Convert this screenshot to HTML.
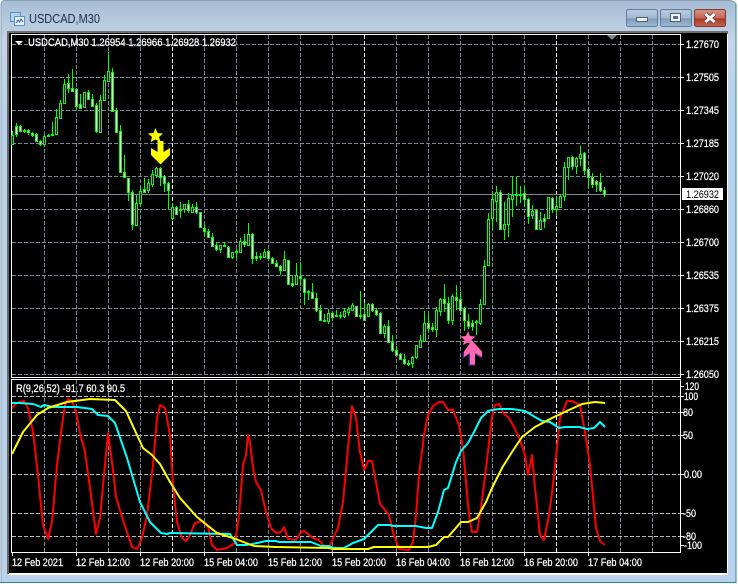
<!DOCTYPE html>
<html><head><meta charset="utf-8"><style>
html,body{margin:0;padding:0;background:#fff}
body{width:738px;height:584px;overflow:hidden;position:relative}
svg{position:absolute;left:0;top:0;display:block}
text{font-family:"Liberation Sans",sans-serif}
.t{stroke:#fff;stroke-width:.25}
</style></head><body>
<svg width="738" height="584" viewBox="0 0 738 584" xmlns="http://www.w3.org/2000/svg">
<defs>
<linearGradient id="f" x1="0" y1="0" x2="0" y2="1"><stop offset="0" stop-color="#a7bdd5"/><stop offset=".07" stop-color="#c4d5e6"/><stop offset=".2" stop-color="#b9d1ea"/><stop offset="1" stop-color="#b9d1ea"/></linearGradient>
<linearGradient id="b" x1="0" y1="0" x2="0" y2="1"><stop offset="0" stop-color="#b8ccdf"/><stop offset=".5" stop-color="#a0b8d0"/><stop offset=".55" stop-color="#7f9bb9"/><stop offset="1" stop-color="#a0bad4"/></linearGradient>
<linearGradient id="c" x1="0" y1="0" x2="0" y2="1"><stop offset="0" stop-color="#d69585"/><stop offset=".5" stop-color="#c76656"/><stop offset=".55" stop-color="#ab3a28"/><stop offset="1" stop-color="#c4634c"/></linearGradient>
</defs>
<rect width="738" height="584" fill="#fff"/>
<path d="M4 0.5H730Q736 1 736 6V582.5H1V5Q1 1 4 .5Z" fill="url(#f)" stroke="#8aa0b6"/>
<path d="M0 582.5H736V4" fill="none" stroke="#2e8c9c"/>
<rect x="8" y="31" width="720" height="544" fill="#fff"/>
<rect x="7" y="31" width="2" height="543" fill="#666"/>
<rect x="7" y="31" width="721" height="3" fill="#6e6e6e"/>
<rect x="9" y="33" width="718" height="540" fill="#000"/>

<!-- title -->
<g>
<rect x="10.5" y="12.5" width="10" height="9" fill="#b5d2ee" stroke="#5c8fc4"/>
<rect x="14.5" y="16.5" width="10" height="9" fill="#e6f1fb" stroke="#5c8fc4"/>
<path d="M16 23l2-3 1.500 2 1.500-3 2 3" fill="none" stroke="#3a5f9a"/>
</g>
<text x="29" y="23" font-size="12.500" fill="#1f2b4d" textLength="71" lengthAdjust="spacingAndGlyphs">USDCAD,M30</text>

<!-- buttons -->
<rect x="626.500" y="9.500" width="31" height="17" rx="2" fill="url(#b)" stroke="#5f7d9d"/>
<rect x="660.500" y="9.500" width="31" height="17" rx="2" fill="url(#b)" stroke="#5f7d9d"/>
<rect x="694.500" y="9.500" width="31" height="17" rx="2" fill="url(#c)" stroke="#7d3a30"/>
<rect x="636.500" y="17.500" width="11" height="4" fill="#f0f3f6" stroke="#4d5f73"/>
<rect x="670.500" y="13.500" width="10" height="8" fill="#f0f3f6" stroke="#4d5f73"/>
<rect x="673" y="16" width="5" height="3" fill="#5a6d82"/>
<path d="M705.500 14l9 8M714.500 14l-9 8" stroke="#5d2a20" stroke-width="4.500" fill="none"/>
<path d="M705.500 14l9 8M714.500 14l-9 8" stroke="#fff" stroke-width="3" fill="none"/>

<!-- chart borders -->
<path d="M11.500 34.500H680.500V377.500H11.500ZM11.500 379.500H680.500V552.500H11.500Z" fill="none" stroke="#fff"/>

<!-- grid -->
<path shape-rendering="crispEdges" fill="none" stroke="#778899" stroke-dasharray="4 2" d="M44.500 35V377M76.500 35V377M108.500 35V377M140.500 35V377M204.500 35V377M236.500 35V377M268.500 35V377M300.500 35V377M332.500 35V377M396.500 35V377M428.500 35V377M460.500 35V377M492.500 35V377M524.500 35V377M588.500 35V377M620.500 35V377M652.500 35V377M44.500 380V552M76.500 380V552M108.500 380V552M140.500 380V552M204.500 380V552M236.500 380V552M268.500 380V552M300.500 380V552M332.500 380V552M396.500 380V552M428.500 380V552M460.500 380V552M492.500 380V552M524.500 380V552M588.500 380V552M620.500 380V552M652.500 380V552"/>
<path shape-rendering="crispEdges" fill="none" stroke="#fff" stroke-dasharray="4 2" d="M172.500 35V377M364.500 35V377M556.500 35V377M172.500 380V552M364.500 380V552M556.500 380V552"/>
<path shape-rendering="crispEdges" fill="none" stroke="#778899" stroke-dasharray="4 2" d="M12 44.500H680M12 77.500H680M12 110.500H680M12 143.500H680M12 176.500H680M12 209.500H680M12 242.500H680M12 275.500H680M12 308.500H680M12 341.500H680M12 374.500H680"/>
<path shape-rendering="crispEdges" fill="none" stroke="#bbb" stroke-dasharray="4 2" d="M12 396.500H680M12 412.500H680M12 435.500H680M12 474.500H680M12 513.500H680M12 536.500H680"/>
<path shape-rendering="crispEdges" fill="none" stroke="#778899" d="M12 194.500H680"/>
<polygon points="607,35 617,35 612,40" fill="#778899"/>
<polygon points="15,41 23,41 19,45" fill="#fff"/>

<!-- wicks -->
<path shape-rendering="crispEdges" fill="none" stroke="#00ff00" d="M12.500 131V145M16.500 123V137M20.500 125V132M24.500 129V133M28.500 129V135M32.500 132V137M36.500 133V141M40.500 140V146M44.500 135V145M48.500 134V137M52.500 122V136M56.500 109V135M60.500 100V119M64.500 79V104M68.500 74V93M72.500 69V91M76.500 88V109M80.500 94V109M84.500 92V107M88.500 90V100M92.500 94V107M96.500 103V133M100.500 95V133M104.500 75V101M108.500 52V81M112.500 68V112M116.500 108V132M120.500 125V172M124.500 155V178M128.500 178V201M132.500 190V230M136.500 195V226M140.500 187V206M144.500 178V193M148.500 179V193M152.500 170V187M156.500 167V178M160.500 167V186M164.500 175V192M168.500 182V209M172.500 203V220M176.500 206V215M180.500 202V218M184.500 204V213M188.500 200V213M192.500 204V213M196.500 202V214M200.500 212V228M204.500 224V237M208.500 229V238M212.500 233V247M216.500 242V251M220.500 245V253M224.500 242V247M228.500 246V258M232.500 252V259M236.500 249V259M240.500 238V253M244.500 234V247M248.500 223V246M252.500 233V264M256.500 252V261M260.500 253V260M264.500 249V258M268.500 250V259M272.500 257V264M276.500 260V267M280.500 265V275M284.500 251V270M288.500 260V285M292.500 275V287M296.500 263V285M300.500 262V286M304.500 278V305M308.500 290V300M312.500 283V299M316.500 293V312M320.500 305V321M324.500 314V322M328.500 309V324M332.500 312V319M336.500 310V317M340.500 312V319M344.500 308V318M348.500 307V316M352.500 303V311M356.500 306V317M360.500 291V319M364.500 302V321M368.500 303V317M372.500 303V312M376.500 308V316M380.500 312V334M384.500 324V338M388.500 320V343M392.500 335V352M396.500 346V356M400.500 353V360M404.500 354V365M408.500 360V366M412.500 356V368M416.500 345V359M420.500 335V348M424.500 311V342M428.500 315V332M432.500 323V332M436.500 307V337M440.500 298V316M444.500 284V312M448.500 297V324M452.500 294V325M456.500 285V310M460.500 292V312M464.500 307V331M468.500 314V329M472.500 320V331M476.500 320V335M480.500 299V325M484.500 260V305M488.500 213V266M492.500 193V230M496.500 186V222M500.500 190V229M504.500 202V240M508.500 193V237M512.500 177V217M516.500 177V206M520.500 186V203M524.500 187V207M528.500 198V224M532.500 205V219M536.500 209V229M540.500 212V229M544.500 214V228M548.500 197V218M552.500 197V213M556.500 196V216M560.500 195V207M564.500 162V201M568.500 157V180M572.500 156V170M576.500 157V174M580.500 146V166M584.500 152V175M588.500 167V188M592.500 173V188M596.500 180V192M600.500 173V192M604.500 187V197"/>
<!-- black bodies -->
<path shape-rendering="crispEdges" fill="#000" stroke="#00ff00" d="M11.500 135.500h2v9h-2zM43.500 136.500h2v8h-2zM47.500 135.500h2v1h-2zM51.500 134.500h2v1h-2zM55.500 117.500h2v17h-2zM59.500 103.500h2v15h-2zM63.500 84.500h2v19h-2zM83.500 92.500h2v15h-2zM99.500 100.500h2v32h-2zM103.500 80.500h2v20h-2zM107.500 71.500h2v10h-2zM135.500 203.500h2v22h-2zM139.500 191.500h2v12h-2zM147.500 183.500h2v7h-2zM151.500 174.500h2v10h-2zM155.500 168.500h2v7h-2zM171.500 207.500h2v11h-2zM179.500 209.500h2v1h-2zM183.500 204.500h2v5h-2zM191.500 207.500h2v5h-2zM219.500 245.500h2v4h-2zM223.500 245.500h2v1h-2zM231.500 252.500h2v5h-2zM239.500 241.500h2v11h-2zM247.500 234.500h2v11h-2zM263.500 252.500h2v5h-2zM283.500 259.500h2v11h-2zM295.500 275.500h2v9h-2zM327.500 313.500h2v8h-2zM343.500 311.500h2v5h-2zM347.500 309.500h2v3h-2zM351.500 305.500h2v5h-2zM367.500 304.500h2v12h-2zM383.500 326.500h2v7h-2zM411.500 357.500h2v6h-2zM415.500 345.500h2v12h-2zM419.500 340.500h2v7h-2zM423.500 323.500h2v18h-2zM435.500 310.500h2v19h-2zM439.500 299.500h2v12h-2zM451.500 296.500h2v24h-2zM479.500 304.500h2v19h-2zM483.500 266.500h2v38h-2zM487.500 219.500h2v46h-2zM491.500 199.500h2v19h-2zM495.500 192.500h2v9h-2zM503.500 224.500h2v5h-2zM507.500 198.500h2v26h-2zM511.500 195.500h2v4h-2zM531.500 211.500h2v4h-2zM539.500 220.500h2v9h-2zM547.500 197.500h2v21h-2zM555.500 206.500h2v3h-2zM559.500 196.500h2v11h-2zM563.500 167.500h2v29h-2zM567.500 157.500h2v10h-2zM575.500 158.500h2v8h-2zM579.500 154.500h2v4h-2z"/>
<!-- white bodies -->
<path shape-rendering="crispEdges" fill="#fff" stroke="#00ff00" d="M15.500 126.500h2v8h-2zM19.500 126.500h2v5h-2zM23.500 130.500h2v1h-2zM27.500 130.500h2v2h-2zM31.500 133.500h2v2h-2zM35.500 134.500h2v7h-2zM39.500 141.500h2v3h-2zM67.500 83.500h2v5h-2zM71.500 88.500h2v3h-2zM75.500 89.500h2v17h-2zM79.500 104.500h2v4h-2zM87.500 92.500h2v7h-2zM91.500 99.500h2v7h-2zM95.500 105.500h2v26h-2zM111.500 72.500h2v39h-2zM115.500 110.500h2v22h-2zM119.500 131.500h2v41h-2zM123.500 172.500h2v5h-2zM127.500 178.500h2v14h-2zM131.500 192.500h2v32h-2zM143.500 189.500h2v3h-2zM159.500 168.500h2v9h-2zM163.500 176.500h2v7h-2zM167.500 183.500h2v7h-2zM175.500 207.500h2v7h-2zM187.500 204.500h2v6h-2zM195.500 207.500h2v5h-2zM199.500 212.500h2v15h-2zM203.500 228.500h2v3h-2zM207.500 231.500h2v6h-2zM211.500 237.500h2v9h-2zM215.500 245.500h2v4h-2zM227.500 247.500h2v10h-2zM235.500 251.500h2v1h-2zM243.500 241.500h2v3h-2zM251.500 234.500h2v24h-2zM255.500 256.500h2v2h-2zM259.500 256.500h2v1h-2zM267.500 251.500h2v7h-2zM271.500 258.500h2v5h-2zM275.500 263.500h2v3h-2zM279.500 266.500h2v4h-2zM287.500 260.500h2v24h-2zM291.500 283.500h2v2h-2zM299.500 276.500h2v2h-2zM303.500 279.500h2v13h-2zM307.500 291.500h2v1h-2zM311.500 292.500h2v6h-2zM315.500 298.500h2v12h-2zM319.500 310.500h2v10h-2zM323.500 320.500h2v1h-2zM331.500 313.500h2v4h-2zM335.500 315.500h2v1h-2zM339.500 315.500h2v1h-2zM355.500 306.500h2v10h-2zM359.500 315.500h2v1h-2zM363.500 314.500h2v6h-2zM371.500 304.500h2v6h-2zM375.500 310.500h2v4h-2zM379.500 313.500h2v20h-2zM387.500 326.500h2v16h-2zM391.500 342.500h2v8h-2zM395.500 350.500h2v5h-2zM399.500 354.500h2v5h-2zM403.500 359.500h2v4h-2zM407.500 363.500h2v1h-2zM427.500 323.500h2v5h-2zM431.500 327.500h2v2h-2zM443.500 299.500h2v4h-2zM447.500 303.500h2v17h-2zM455.500 297.500h2v3h-2zM459.500 299.500h2v11h-2zM463.500 308.500h2v12h-2zM467.500 321.500h2v5h-2zM471.500 323.500h2v3h-2zM475.500 321.500h2v1h-2zM499.500 192.500h2v37h-2zM515.500 194.500h2v1h-2zM519.500 194.500h2v1h-2zM523.500 193.500h2v6h-2zM527.500 199.500h2v17h-2zM535.500 210.500h2v19h-2zM543.500 218.500h2v3h-2zM551.500 198.500h2v11h-2zM571.500 157.500h2v9h-2zM583.500 153.500h2v17h-2zM587.500 169.500h2v8h-2zM591.500 177.500h2v7h-2zM595.500 181.500h2v3h-2zM599.500 182.500h2v8h-2zM603.500 190.500h2v4h-2z"/>

<!-- arrows -->
<polygon points="155.500,128 157.500,133 163,133.500 159,137 160.500,142 155.500,139.500 150.500,142 152,137 148,133.500 153.500,133" fill="#ffff00"/>
<polygon points="157.500,141 163.500,141 163.500,152 170,148 170,155 160.500,164.500 151,155 151,148 157.500,152" fill="#ffff00"/>
<polygon points="472,342 482.500,353 482.500,358.500 475.500,354 475.500,365.500 469,365.500 469,354 463,358.500 463,353" fill="#3a2a7a" transform="translate(-.5 .5)"/>
<polygon points="472,340.500 482,351.500 482,357 475,353 475,364.500 470,364.500 470,353 464,357 464,351.500" fill="#ff69b4"/>
<polygon points="468,331 470,336 475.500,336.500 471.500,340 473,345 468,342.500 463,345 464.500,340 460.500,336.500 466,336" fill="#ff69b4"/>

<!-- indicators -->
<clipPath id="s"><rect x="12" y="380" width="668" height="172"/></clipPath>
<g clip-path="url(#s)" fill="none" stroke-width="2" stroke-linejoin="round">
<polyline stroke="#ff0000" points="12,408 16,404 19,402 24,401 28,408 33,432 38,475 43,525 48,539 52,522 57,465 62,425 65,405 68,399 72,401 76,412 80,433 85,452 90,488 96,534 100,518 104,475 108,433 112,462 116,497 123,520 132,547 137,549 142,538 147,515 153,465 157,418 160,405 165,408 170,435 173,485 177,522 182,538 186,541 190,535 195,523 202,521 208,527 212,545 217,550 227,548 235,543 239,515 243,465 246,455 248,435 250,442 253,468 256,482 261,490 266,512 271,528 276,533 281,532 284,527 288,539 296,540 301,532 304,531 313,538 319,540 323,545 329,547 338,528 343,502 348,448 352,406 356,418 360,452 364,470 368,461 372,461 376,482 380,504 389,515 393,532 399,549 409,550 413,542 416,515 419,475 424,435 428,415 433,406 439,402 443,402 448,410 453,410 459,425 463,448 466,482 469,515 472,532 477,532 481,508 486,468 492,417 495,405 499,404 504,414 509,418 514,427 520,440 525,455 528,475 532,455 535,488 540,535 544,540 549,515 553,485 557,447 560,418 567,401 572,401 580,405 585,432 590,465 596,528 600,541 605,545"/>
<polyline stroke="#00ffff" points="12,403 20,403 33,404 41,407 44,405 53,407 77,407 92,409 98,415 108,416 115,423 127,458 140,502 150,522 161,533 167,534 170,533 230,534 237,545 246,545 253,544 266,541 276,541 279,542 311,542 321,546 329,546 334,548 344,548 353,543 364,539 378,525 389,525 394,526 416,526 426,528 432,528 438,512 444,490 448,488 456,462 461,451 468,443 474,432 481,418 488,411 492,410 499,409 512,409 525,411 535,417 542,421 550,422 559,428 565,427 579,427 587,429 594,428 600,422 605,427"/>
<polyline stroke="#ffff00" points="12,454 23,432 37,415 48,408 67,402 90,399 115,400 126,411 137,435 143,448 152,455 160,464 170,482 180,498 197,517 217,533 233,538 246,543 254,546 276,547 329,548 333,549 368,549 374,547 428,547 436,545 444,537 448,537 461,522 468,522 477,518 486,502 492,488 502,468 512,452 522,437 535,427 552,418 569,410 582,404 595,402 605,403"/>
</g>

<!-- chart headers -->
<text class="t" x="28" y="46" font-size="11" fill="#fff" textLength="208" lengthAdjust="spacingAndGlyphs">USDCAD,M30  1.26954 1.26966 1.26928 1.26932</text>
<text class="t" x="16" y="392" font-size="11" fill="#fff" textLength="109" lengthAdjust="spacingAndGlyphs">R(9,26,52) -91.7 60.3 90.5</text>

<!-- price axis -->
<path shape-rendering="crispEdges" stroke="#fff" fill="none" d="M681 44.500h3M681 77.500h3M681 110.500h3M681 143.500h3M681 176.500h3M681 209.500h3M681 242.500h3M681 275.500h3M681 308.500h3M681 341.500h3M681 374.500h3M681 386.500h3M681 396.500h3M681 412.500h3M681 435.500h3M681 474.500h3M681 513.500h3M681 536.500h3M681 545.500h3"/>
<g class="t" font-size="11" fill="#fff">
<text x="686" y="48" textLength="33" lengthAdjust="spacingAndGlyphs">1.27670</text>
<text x="686" y="81" textLength="33" lengthAdjust="spacingAndGlyphs">1.27505</text>
<text x="686" y="114" textLength="33" lengthAdjust="spacingAndGlyphs">1.27345</text>
<text x="686" y="147" textLength="33" lengthAdjust="spacingAndGlyphs">1.27185</text>
<text x="686" y="180" textLength="33" lengthAdjust="spacingAndGlyphs">1.27020</text>
<text x="686" y="213" textLength="33" lengthAdjust="spacingAndGlyphs">1.26860</text>
<text x="686" y="246" textLength="33" lengthAdjust="spacingAndGlyphs">1.26700</text>
<text x="686" y="279" textLength="33" lengthAdjust="spacingAndGlyphs">1.26535</text>
<text x="686" y="312" textLength="33" lengthAdjust="spacingAndGlyphs">1.26375</text>
<text x="686" y="345" textLength="33" lengthAdjust="spacingAndGlyphs">1.26215</text>
<text x="686" y="378" textLength="33" lengthAdjust="spacingAndGlyphs">1.26050</text>
<text x="685" y="390" textLength="14" lengthAdjust="spacingAndGlyphs">120</text>
<text x="684" y="400" textLength="14" lengthAdjust="spacingAndGlyphs">100</text>
<text x="683" y="416" textLength="10" lengthAdjust="spacingAndGlyphs">80</text>
<text x="683" y="439" textLength="10" lengthAdjust="spacingAndGlyphs">50</text>
<text x="684" y="478" textLength="18" lengthAdjust="spacingAndGlyphs">0.00</text>
<text x="683" y="517" textLength="13" lengthAdjust="spacingAndGlyphs">-50</text>
<text x="683" y="540" textLength="13" lengthAdjust="spacingAndGlyphs">-80</text>
<text x="684" y="549" textLength="18" lengthAdjust="spacingAndGlyphs">-100</text>
</g>
<rect x="682" y="188" width="41" height="12" fill="#fff"/>
<text x="686" y="198" font-size="11" fill="#000" textLength="33" lengthAdjust="spacingAndGlyphs">1.26932</text>

<!-- time axis -->
<path shape-rendering="crispEdges" stroke="#fff" fill="none" d="M12.500 553v3M76.500 553v3M140.500 553v3M204.500 553v3M268.500 553v3M332.500 553v3M396.500 553v3M460.500 553v3M524.500 553v3M588.500 553v3"/>
<g class="t" font-size="11" fill="#fff">
<text x="12" y="566" textLength="51" lengthAdjust="spacingAndGlyphs">12 Feb 2021</text>
<text x="76" y="566" textLength="54" lengthAdjust="spacingAndGlyphs">12 Feb 12:00</text>
<text x="140" y="566" textLength="54" lengthAdjust="spacingAndGlyphs">12 Feb 20:00</text>
<text x="204" y="566" textLength="54" lengthAdjust="spacingAndGlyphs">15 Feb 04:00</text>
<text x="268" y="566" textLength="54" lengthAdjust="spacingAndGlyphs">15 Feb 12:00</text>
<text x="332" y="566" textLength="54" lengthAdjust="spacingAndGlyphs">15 Feb 20:00</text>
<text x="396" y="566" textLength="54" lengthAdjust="spacingAndGlyphs">16 Feb 04:00</text>
<text x="460" y="566" textLength="54" lengthAdjust="spacingAndGlyphs">16 Feb 12:00</text>
<text x="524" y="566" textLength="54" lengthAdjust="spacingAndGlyphs">16 Feb 20:00</text>
<text x="588" y="566" textLength="54" lengthAdjust="spacingAndGlyphs">17 Feb 04:00</text>
</g>
</svg>
</body></html>
